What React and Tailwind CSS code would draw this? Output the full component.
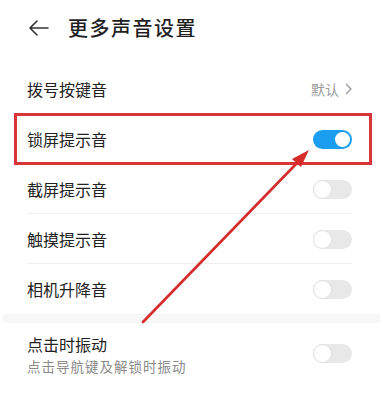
import React from "react";

const Toggle = ({ on }) => {
  if (on) {
    return (
      <div className="w-[39px] h-[19px] rounded-full bg-[#1b9ef0] flex items-center justify-end pr-[2px]">
        <div className="w-[15px] h-[15px] rounded-full bg-white" />
      </div>
    );
  }
  return (
    <div className="w-[39px] h-[19px] rounded-full bg-[#e8e8e8] flex items-center">
      <div className="w-[19px] h-[19px] rounded-full bg-white border border-[#e2e2e2]" />
    </div>
  );
};

const Row = ({ label, right, divider }) => (
  <div className="h-[50px] flex items-center justify-between relative">
    <span className="text-[16px] text-[#222]">{label}</span>
    {right}
    {divider && <div className="absolute left-0 right-0 bottom-0 h-px bg-[#efefef]" />}
  </div>
);

const App = () => {
  return (
    <div
      className="relative w-[383px] h-[403px] bg-white overflow-hidden"
      style={{ fontFamily: '"Noto Sans CJK SC", "Noto Sans", sans-serif' }}
    >
      {/* header */}
      <div className="h-[56px] flex items-center pl-[29px]">
        <svg width="20" height="16" viewBox="0 0 20 16" fill="none" stroke="#333" strokeWidth="1.6" strokeLinecap="round" strokeLinejoin="round">
          <path d="M19 8H2M8 1L1 8l7 7" />
        </svg>
        <span className="ml-[19px] text-[20px] font-medium text-[#1f1f1f] tracking-[1.5px]">更多声音设置</span>
      </div>

      <div className="mt-2 px-[27px] pr-[31px]">
        <Row
          label="拨号按键音"
          divider
          right={
            <span className="text-[14px] text-[#9a9a9a] flex items-center gap-[6px]">
              默认
              <svg width="7" height="12" viewBox="0 0 7 12" fill="none" stroke="#9a9a9a" strokeWidth="1.3">
                <path d="M1 1l5 5-5 5" />
              </svg>
            </span>
          }
        />
        <Row label="锁屏提示音" divider right={<Toggle on />} />
        <Row label="截屏提示音" divider right={<Toggle />} />
        <Row label="触摸提示音" divider right={<Toggle />} />
        <Row label="相机升降音" right={<Toggle />} />
      </div>

      <div className="h-[9px] bg-[#f7f7f7] mx-[3px]" />

      <div className="px-[27px] pr-[31px] pt-[9px] flex items-center justify-between">
        <div className="flex flex-col">
          <span className="text-[16px] text-[#222] leading-[24px]">点击时振动</span>
          <span className="text-[13.5px] text-[#8a8a8a] leading-[21px] tracking-[1px]">点击导航键及解锁时振动</span>
        </div>
        <div className="mb-[3px]">
          <Toggle />
        </div>
      </div>

      {/* annotation: red box */}
      <div className="absolute left-[14px] top-[113px] w-[358px] h-[52px] border-[3px] border-[#d8343a] pointer-events-none" />

      {/* annotation: arrow */}
      <svg className="absolute inset-0 pointer-events-none" width="383" height="403" viewBox="0 0 383 403">
        <line x1="143" y1="322" x2="298" y2="162" stroke="#d42b2b" strokeWidth="2.6" strokeLinecap="round" />
        <polygon points="309,150 301,167 292,159" fill="#d42b2b" />
      </svg>
    </div>
  );
};

export default App;
